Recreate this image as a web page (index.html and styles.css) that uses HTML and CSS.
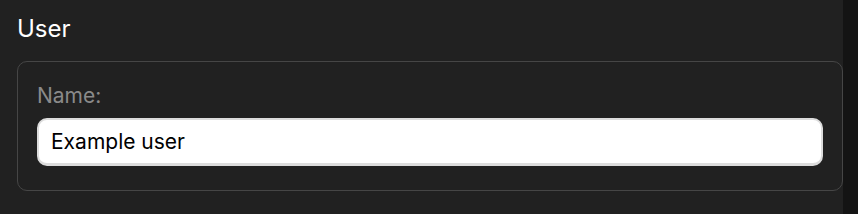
FILE: index.html
```html
<!DOCTYPE html>
<html>
<head>
<meta charset="utf-8">
<link rel="stylesheet" href="styles.css">
</head>
<body>
<div class="layout">
  <main class="main">
    <h2 class="title">User</h2>
    <section class="card">
      <label class="label" for="name">Name:</label>
      <input class="input" id="name" type="text" value="Example user">
    </section>
  </main>
  <aside class="rail"></aside>
</div>
</body>
</html>
```

FILE: styles.css
```css
html, body {
  margin: 0;
  padding: 0;
  height: 100%;
  background: #212121;
  font-family: Inter, "Noto Sans", sans-serif;
}
.layout {
  display: flex;
  height: 214px;
  overflow: hidden;
}
.main {
  flex: 1;
  padding: 14px 0 0 17px;
  background: #212121;
}
.rail {
  width: 15px;
  background: #141414;
}
.title {
  margin: 0 0 18px 0;
  font-size: 24px;
  font-weight: 400;
  line-height: 29px;
  color: #ffffff;
}
.card {
  display: flex;
  flex-direction: column;
  border: 1px solid #464646;
  border-radius: 10px;
  padding: 22px 19px 24px 19px;
}
.label {
  font-size: 21px;
  line-height: 24px;
  color: #8a8a8a;
  margin-bottom: 10px;
}
.input {
  box-sizing: border-box;
  height: 48px;
  width: 100%;
  border: 2px solid #dcdcdc;
  border-bottom-width: 3px;
  border-radius: 10px;
  background: #ffffff;
  padding: 0 12px 1px 12px;
  font-family: Inter, "Noto Sans", sans-serif;
  font-size: 21px;
  color: #000000;
  outline: none;
}
```
